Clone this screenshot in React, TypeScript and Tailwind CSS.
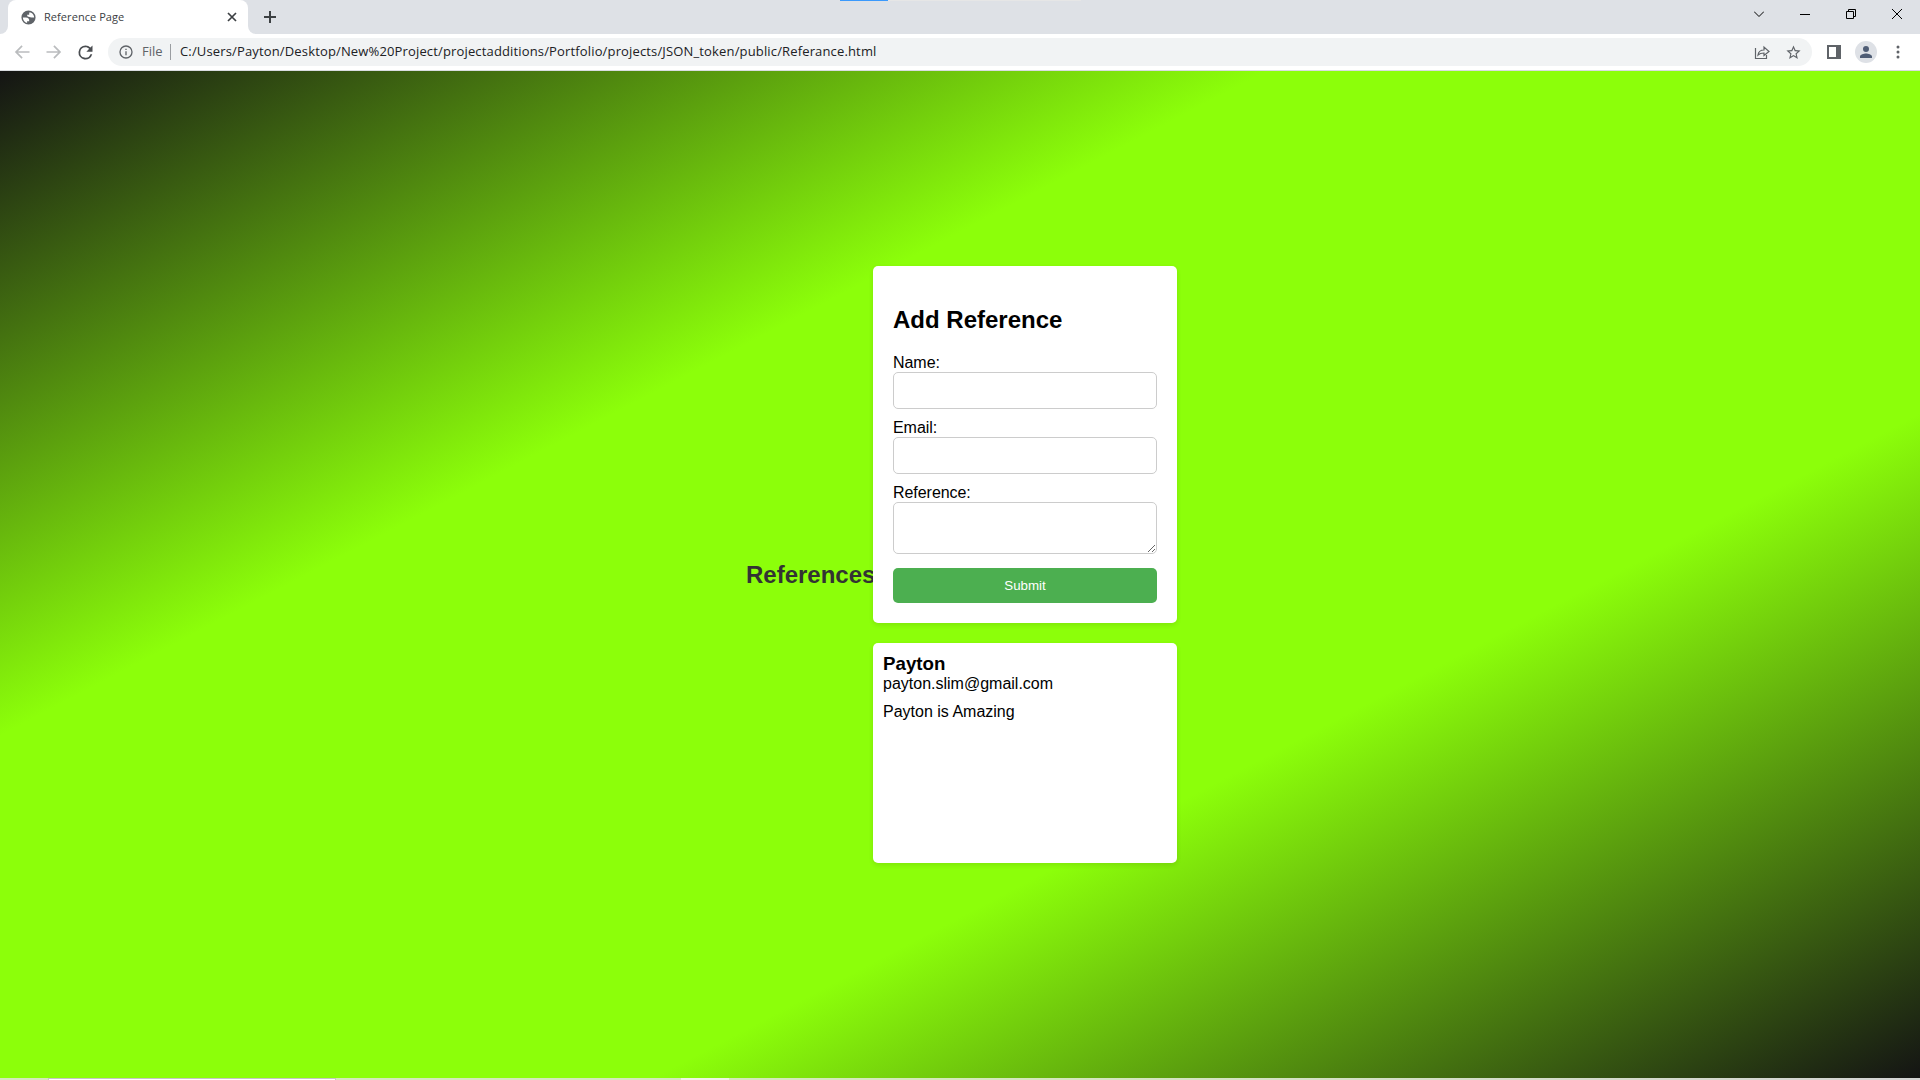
import type { ReactNode } from "react";

function Icon({ children, className }: { children: ReactNode; className: string }) {
  return (
    <svg viewBox="0 0 24 24" className={className} fill="currentColor">
      {children}
    </svg>
  );
}

function TabStrip() {
  return (
    <div className="relative flex h-[34px] shrink-0 bg-[#dee1e6]">
      <div className="absolute top-0 left-[840px] flex h-px w-[241px] bg-[#e6e6e6]">
        <div className="w-12 bg-[#3b99fc]" />
      </div>
      <div className="w-2 bg-white">
        <div className="h-full rounded-br-lg bg-[#dee1e6]" />
      </div>
      <div className="flex w-[240px] items-center rounded-t-lg bg-white pr-[11px] pl-[12px]">
        <Icon className="size-[17px] shrink-0 text-[#5f6368]">
          <path d="M12 2a10 10 0 1 0 0 20 10 10 0 0 0 0-20ZM4 12h4.4c3.400.02 4.900 1.730 4.600 5.130H10v2.500c-3.450-.86-6-3.920-6-7.630Zm8.230-1C10.860 10.930 10 9.360 10 8h3V5h1.960C17.920 6.250 20 9.010 20 12h-3.270c-1.510.02-2.980-.11-4.500-1Z" />
        </Icon>
        <span className="ml-[7px] font-['Open_Sans',sans-serif] text-[11px] tracking-[0.06px] text-[#3c4043]">
          Reference Page
        </span>
        <svg viewBox="0 0 10 10" className="ml-auto size-[10px] shrink-0" fill="none" stroke="#3c4043" strokeWidth="1.7">
          <path d="m1 1 8 8M9 1 1 9" />
        </svg>
      </div>
      <div className="w-2 bg-white">
        <div className="h-full rounded-bl-lg bg-[#dee1e6]" />
      </div>
      <svg viewBox="0 0 12 12" className="mt-[11px] ml-2 size-3" fill="none" stroke="#3c4043" strokeWidth="2">
        <path d="M6 0v12M0 6h12" />
      </svg>
      <div className="ml-auto flex items-start pt-[9px] pr-[18px] text-black">
        <svg viewBox="0 0 10 10" className="mr-[36px] size-[10px]" fill="none" stroke="currentColor">
          <path d="m0 2.500 5 5 5-5" />
        </svg>
        <svg viewBox="0 0 10 10" className="mr-[36px] size-[10px]">
          <path d="M0 5h10v1H0z" />
        </svg>
        <svg viewBox="0 0 10 10" className="mr-[36px] size-[10px]" fill="none" stroke="currentColor">
          <path d="M.5 2.500h7v7h-7zM2.500 2.500v-2h7v7h-2" />
        </svg>
        <svg viewBox="0 0 10 10" className="size-[10px]" fill="none" stroke="currentColor">
          <path d="m0 0 10 10M10 0 0 10" />
        </svg>
      </div>
    </div>
  );
}

function Toolbar() {
  return (
    <div className="flex h-[37px] shrink-0 items-center border-b border-[#d9dce0] bg-white pr-[12px] pl-[12px] text-[#5f6368]">
      <Icon className="size-5 text-[#babcbe]">
        <path d="M21 11H7.200l5.590-5.590L11.400 4l-8 8 8 8 1.410-1.410L7.200 13H21v-2z" />
      </Icon>
      <Icon className="ml-3 size-5 text-[#babcbe]">
        <path d="m12.600 4-1.410 1.410L16.800 11H3v2h13.800l-5.600 5.590L12.600 20l8-8z" />
      </Icon>
      <Icon className="ml-[11px] size-[21px] text-[#4a4d51]">
        <path d="M17.650 6.350A7.958 7.958 0 0 0 12 4a8 8 0 1 0 7.730 10h-2.080A6 6 0 1 1 12 6c1.660 0 3.140.69 4.220 1.780L13 11h7V4l-2.350 2.350z" />
      </Icon>
      <div className="ml-3 flex h-7 flex-1 items-center rounded-full bg-[#f1f3f4] pr-[10px] pl-[10px] font-['Open_Sans',sans-serif] text-[13px]">
        <Icon className="size-4">
          <path d="M11 7h2v2h-2zm0 4h2v6h-2zm1-9a10 10 0 1 0 0 20 10 10 0 0 0 0-20zm0 18a8 8 0 1 1 0-16 8 8 0 0 1 0 16z" />
        </Icon>
        <span className="ml-[8px] w-[28px]">File</span>
        <div className="mr-[9px] h-4 w-px bg-[#9a9da1]" />
        <span className="tracking-[0.15px] whitespace-nowrap text-[#202124]">
          C:/Users/Payton/Desktop/New%20Project/projectadditions/Portfolio/projects/JSON_token/public/Referance.html
        </span>
        <svg viewBox="0 0 16 16" className="mr-[15px] ml-auto size-4" fill="none" stroke="currentColor" strokeWidth="1.200">
          <path d="M1.500 4v10.500h11V11M4 11c.5-3.500 2.500-5 6-5V3l5 4.500-5 4V9C7.500 9 5.500 9.500 4 11z" />
        </svg>
        <Icon className="size-[17px]">
          <path d="m22 9.240-7.190-.62L12 2 9.190 8.630 2 9.240l5.460 4.730L5.820 21 12 17.270 18.180 21l-1.630-7.030L22 9.240zM12 15.400l-3.760 2.270 1-4.280-3.320-2.880 4.380-.38L12 6.100l1.710 4.040 4.380.38-3.320 2.880 1 4.280L12 15.400z" />
        </Icon>
      </div>
      <svg viewBox="0 0 14 14" className="ml-[15px] size-[14px]" fill="currentColor">
        <path d="M0 0h14v14H0zM2 2v10h7V2z" fillRule="evenodd" />
      </svg>
      <div className="ml-[14px] flex size-[22px] items-center justify-center rounded-full bg-[#dee1e6] text-[#4f5d75]">
        <Icon className="size-[18px]">
          <path d="M12 12a4 4 0 1 0 0-8 4 4 0 0 0 0 8zm0 2c-2.670 0-8 1.340-8 4v2h16v-2c0-2.660-5.330-4-8-4z" />
        </Icon>
      </div>
      <svg viewBox="0 0 20 20" className="ml-[11px] size-5" fill="currentColor">
        <circle cx="10" cy="5" r="1.500" />
        <circle cx="10" cy="10" r="1.500" />
        <circle cx="10" cy="15" r="1.500" />
      </svg>
    </div>
  );
}

function ReferenceForm() {
  return (
    <form className="flex h-[357px] flex-col rounded-[5px] bg-white p-5 shadow-[0_2px_5px_rgba(0,0,0,0.1)]">
      <h2 className="mt-5 mb-5 text-2xl leading-[27px] font-bold">Add Reference</h2>
      <label className="pt-px leading-[18px] tracking-[-0.05px]">Name:</label>
      <input className="mb-2.5 h-[37px] shrink-0 rounded-[5px] border border-[#ccc] px-2.5 outline-none" />
      <label className="leading-[18px] tracking-[-0.05px]">Email:</label>
      <input className="mb-2.5 h-[37px] shrink-0 rounded-[5px] border border-[#ccc] px-2.5 outline-none" />
      <label className="leading-[18px] tracking-[-0.05px]">Reference:</label>
      <textarea className="h-[52px] shrink-0 resize-y rounded-[5px] border border-[#ccc] p-2.5 outline-none" />
      <button type="button" className="mt-[14px] h-[35px] shrink-0 rounded-[5px] bg-[#4caf50] text-[13.333px] leading-[15px] text-white">
        Submit
      </button>
    </form>
  );
}

function ReferenceCard() {
  return (
    <article className="mt-5 h-[220px] rounded-[5px] bg-white p-2.5 shadow-[0_2px_5px_rgba(0,0,0,0.1)]">
      <h3 className="pb-px text-[18.72px] leading-[21px] font-bold">Payton</h3>
      <p className="leading-[18px]">payton.slim@gmail.com</p>
      <p className="mt-2.5 leading-[18px]">Payton is Amazing</p>
    </article>
  );
}

export default function App() {
  return (
    <div className="flex h-screen w-full flex-col overflow-hidden">
      <TabStrip />
      <Toolbar />
      <main className="flex flex-1 bg-[linear-gradient(to_bottom_right,#141414,#8cff0a_33%,#8cff0a_67%,#141414)] font-['Liberation_Sans',Arial,sans-serif] text-base text-black">
        <h2 className="mt-[490px] ml-[746px] w-[127px] shrink-0 text-2xl leading-[27px] font-bold text-[#333]">
          References
        </h2>
        <div className="relative mt-[195px] w-[304px]">
          <ReferenceForm />
          <ReferenceCard />
        </div>
      </main>
      <div className="flex h-[2px] shrink-0 bg-[linear-gradient(to_right,#d5e8bd_50%,#d4d4d4)]">
        <div className="ml-12 w-[288px] border-x border-t border-[#c5c5c5] bg-white" />
        <div className="ml-[345px] w-12 bg-[#eff5e6]" />
      </div>
    </div>
  );
}
